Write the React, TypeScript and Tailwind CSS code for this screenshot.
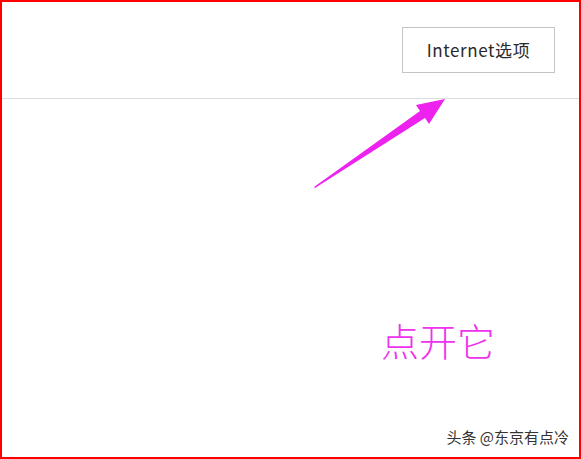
const App = () => {
  return (
    <div className="w-[581px] h-[459px] bg-white border-2 border-[#ff0000] flex flex-col relative overflow-hidden">
      <div className="h-[97px] flex items-start justify-end border-b border-[#dcdcdc] pr-[24px] pt-[25px]">
        <button className="w-[153px] h-[46px] border border-[#c4c4c4] bg-white text-[17px] tracking-[0.6px] text-[#2a2a2a] font-['Noto_Sans_CJK_SC',sans-serif]">
          Internet选项
        </button>
      </div>

      {/* pointer arrow */}
      <svg
        className="absolute left-0 top-0"
        width="581"
        height="459"
        viewBox="0 0 581 459"
      >
        <polygon
          points="312,185 418,109 414,103 443,97 427,122 423,116 313,186"
          fill="#ee22ee"
        />
      </svg>

      <div className="flex-1 flex flex-col items-end justify-between pr-[84px] pt-[222px] pb-[13px]">
        <p className="text-[38px] leading-none text-[#ee33ee] font-light font-['Noto_Sans_CJK_SC',serif]">
          点开它
        </p>
        <p className="-mr-[74px] text-[15px] leading-none text-[#333] font-['Noto_Sans_CJK_SC',sans-serif]">
          头条 @东京有点冷
        </p>
      </div>
    </div>
  )
}

export default App
